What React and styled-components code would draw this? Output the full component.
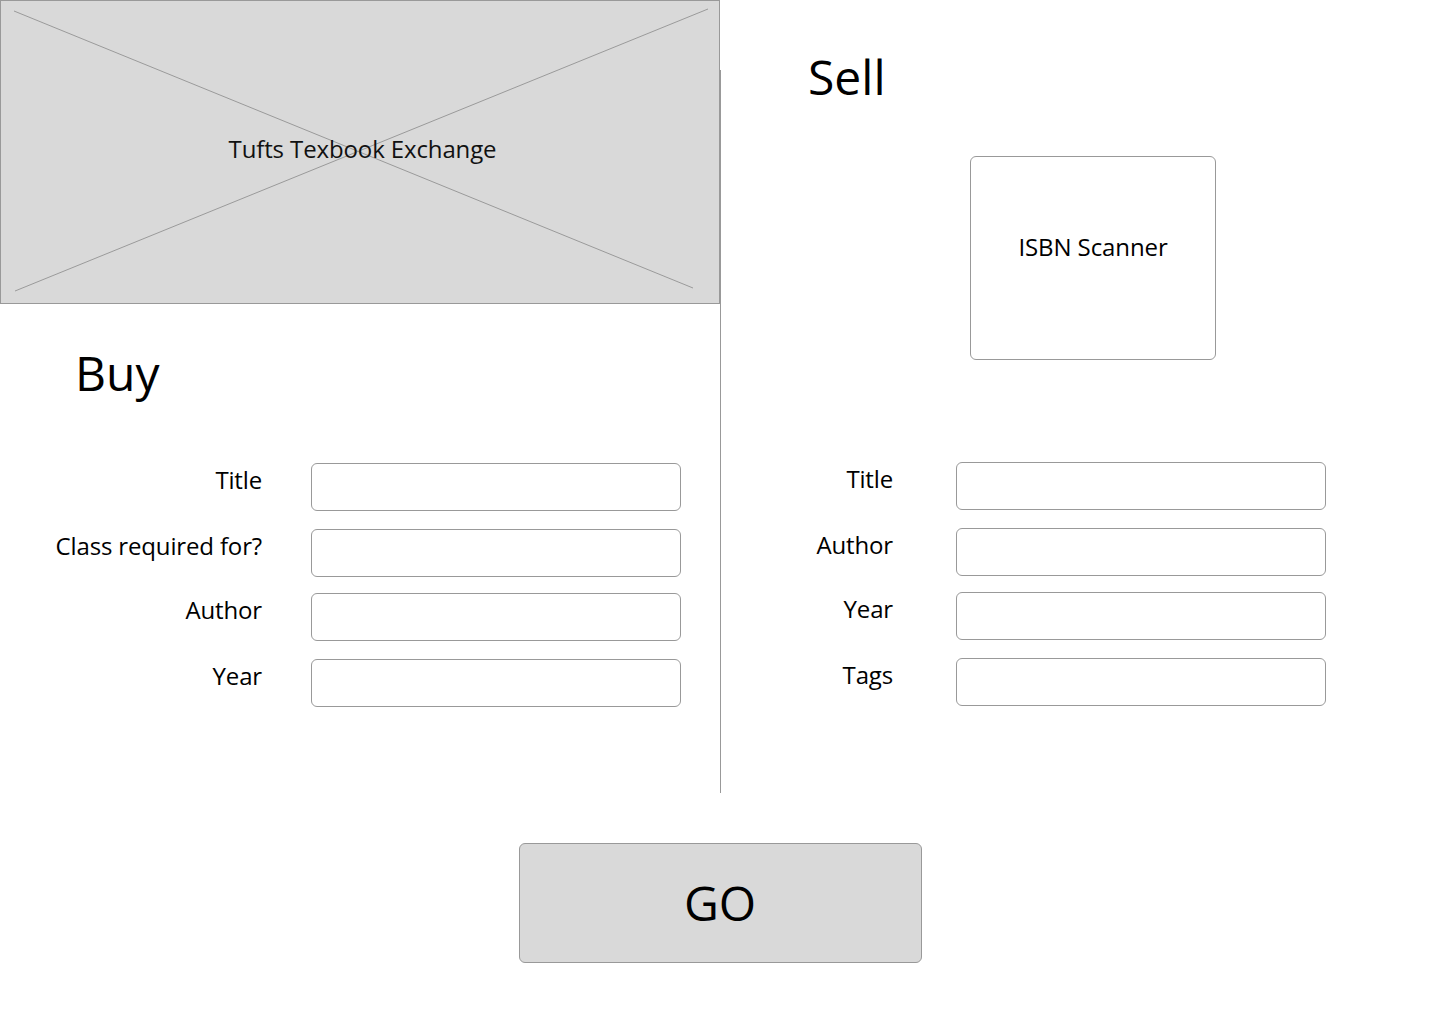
import React from "react";
import styled, { createGlobalStyle } from "styled-components";

const GlobalStyle = createGlobalStyle`
  html, body {
    margin: 0;
    padding: 0;
    background: #ffffff;
  }

  body {
    font-family: "Open Sans", "Liberation Sans", sans-serif;
    color: #000000;
  }
`;

const Page = styled.div`
  width: 1440px;
  height: 1024px;
  display: flex;
  flex-direction: column;
  align-items: center;
`;

const Columns = styled.div`
  width: 100%;
  height: 793px;
  display: grid;
  grid-template-columns: 720px 1px 1fr;
`;

const Column = styled.div`
  display: flex;
  flex-direction: column;
  align-items: flex-start;
`;

const Divider = styled.div`
  margin-top: 70px;
  background: #999999;
`;

const Placeholder = styled.div`
  position: relative;
  box-sizing: border-box;
  width: 720px;
  height: 304px;
  background: #d9d9d9;
  border: 1px solid #999999;
  display: flex;
  justify-content: center;
  align-items: center;
  font-size: 24px;
  letter-spacing: -0.12px;
  color: #111111;

  svg {
    position: absolute;
    inset: 0;
  }

  span {
    position: relative;
    margin-left: 5px;
    margin-bottom: 8px;
  }
`;

const Heading = styled.h1`
  margin: ${(p) => p.$top}px 0 0 ${(p) => p.$left}px;
  font-size: 48px;
  font-weight: 400;
  line-height: 48px;
`;

const Form = styled.div`
  margin-top: ${(p) => p.$top}px;
  display: grid;
  grid-template-columns: ${(p) => p.$labelWidth}px 370px;
  column-gap: ${(p) => p.$gap}px;
  row-gap: 16px;
  align-items: start;
`;

const Label = styled.label`
  margin-top: ${(p) => p.$shift}px;
  font-size: 24px;
  line-height: 34px;
  letter-spacing: -0.15px;
  text-align: right;
  white-space: nowrap;
`;

const Input = styled.input`
  box-sizing: border-box;
  width: 370px;
  height: 48px;
  margin-top: ${(p) => p.$shift}px;
  border: 1px solid #999999;
  border-radius: 6px;
  background: #ffffff;
  font-family: inherit;
  font-size: 20px;
  padding: 0 12px;
  outline: none;
`;

const Scanner = styled.div`
  box-sizing: border-box;
  width: 246px;
  height: 204px;
  margin: 55px 0 0 249px;
  padding-bottom: 24px;
  border: 1px solid #999999;
  border-radius: 6px;
  display: flex;
  justify-content: center;
  align-items: center;
  font-size: 24px;
  letter-spacing: -0.1px;
`;

const GoButton = styled.button`
  box-sizing: border-box;
  width: 403px;
  height: 120px;
  margin-top: 50px;
  background: #d9d9d9;
  border: 1px solid #999999;
  border-radius: 6px;
  font-family: inherit;
  font-size: 48px;
  color: #000000;
  padding: 0 0 2px 0;
  cursor: pointer;
`;

// rows in the mock are spaced 66 / 64 / 66 apart
const rowShift = [0, 2, 0, 2];

function Field({ label, index }) {
  const shift = rowShift[index];
  return (
    <>
      <Label $shift={shift}>{label}</Label>
      <Input type="text" $shift={shift} />
    </>
  );
}

export default function App() {
  const buyFields = ["Title", "Class required for?", "Author", "Year"];
  const sellFields = ["Title", "Author", "Year", "Tags"];

  return (
    <>
      <GlobalStyle />
      <Page>
        <Columns>
          <Column>
            <Placeholder>
              <svg width="720" height="304" viewBox="0 0 720 304">
                <line x1="13" y1="10" x2="692" y2="287" stroke="#9a9a9a" strokeWidth="1" />
                <line x1="14" y1="290" x2="707" y2="8" stroke="#9a9a9a" strokeWidth="1" />
              </svg>
              <span>Tufts Texbook Exchange</span>
            </Placeholder>
            <Heading $top={45} $left={75}>Buy</Heading>
            <Form $top={66} $labelWidth={262} $gap={49}>
              {buyFields.map((f, i) => (
                <Field key={f} label={f} index={i} />
              ))}
            </Form>
          </Column>

          <Divider />

          <Column>
            <Heading $top={53} $left={87}>Sell</Heading>
            <Scanner>ISBN Scanner</Scanner>
            <Form $top={102} $labelWidth={172} $gap={63}>
              {sellFields.map((f, i) => (
                <Field key={f} label={f} index={i} />
              ))}
            </Form>
          </Column>
        </Columns>

        <GoButton>GO</GoButton>
      </Page>
    </>
  );
}
